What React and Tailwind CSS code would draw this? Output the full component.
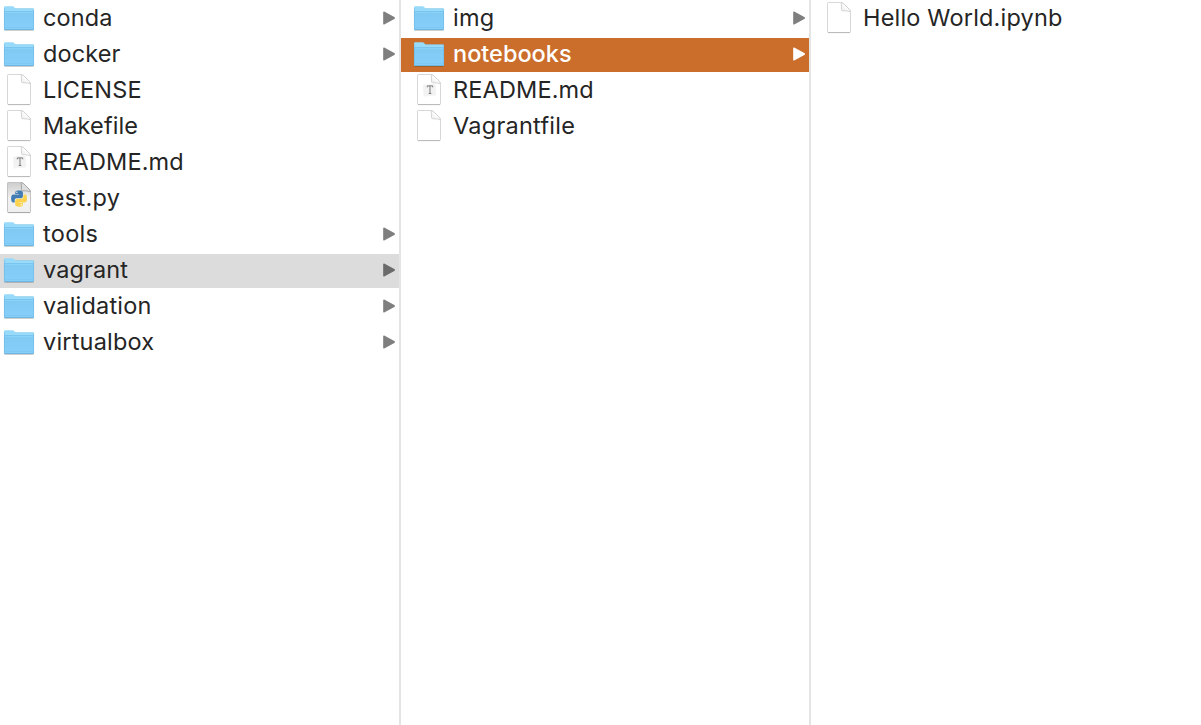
function FolderIcon() {
  return (
    <svg className="h-9 w-[38px] shrink-0" viewBox="0 0 38 36" fill="none">
      <defs>
        <linearGradient id="folderFront" x1="0" y1="12" x2="0" y2="30" gradientUnits="userSpaceOnUse">
          <stop offset="0" stopColor="#7fc9f3" />
          <stop offset="1" stopColor="#86cffa" />
        </linearGradient>
      </defs>
      <path d="M4.500 30.300h29" stroke="#000" strokeOpacity=".2" strokeWidth="1.200" />
      <path d="M4 7.500q0-1.300 1.300-1.300h7.200q1 0 1.600.7l.9 1q.5.500 1.400.5H32.800q1.200 0 1.200 1.200V29q0 1-1 1H5q-1 0-1-1z" fill="#97dafa" />
      <path d="M4 11.500h30V29q0 1-1 1H5q-1 0-1-1z" fill="url(#folderFront)" />
      <path d="M4.500 11.600h29" stroke="#74bfe8" strokeWidth=".8" />
      <path d="M5 12.500h28" stroke="#8dd3f8" strokeWidth=".8" />
      <path d="M5 27.500h28" stroke="#76c0ec" strokeOpacity=".5" strokeWidth=".8" />
      <path d="M4.400 29.600h29.200" stroke="#64a9d3" strokeWidth=".7" />
      <path d="M15 8.500h18.500" stroke="#79bede" strokeOpacity=".7" strokeWidth=".6" />
      <path d="M4.400 8v21.500M33.600 9v20.500" stroke="#66b3dd" strokeOpacity=".55" strokeWidth=".8" />
    </svg>
  );
}

function DocumentIcon({ kind }) {
  const python = kind === "python";
  return (
    <svg className="h-9 w-[38px] shrink-0" viewBox="0 0 38 36">
      <defs>
        <linearGradient id="pyPage" x1="0" y1="0" x2="0" y2="1">
          <stop offset="0" stopColor="#cdcdcd" />
          <stop offset=".55" stopColor="#f2f2f2" />
          <stop offset="1" stopColor="#efefef" />
        </linearGradient>
        <linearGradient id="fold" x1="0" y1="1" x2=".6" y2=".4">
          <stop offset="0" stopColor="#e8e8e8" />
          <stop offset="1" stopColor="#ffffff" />
        </linearGradient>
      </defs>
      <path d="M7.500 3.300q0-.8.800-.8H20.500Q22.500 2.500 24 4L29 9Q30.500 10.500 30.500 12.500V31.700q0 .8-.8.800H8.300q-.8 0-.8-.8z" fill={python ? "url(#pyPage)" : "#fff"} stroke={python ? "#bdbdbd" : "#d2d2d2"} strokeWidth=".9" />
      <path d="M8 32.600h22" stroke={python ? "#a4a4a4" : "#b4b4b4"} strokeWidth=".9" />
      <path d="M21 2.700Q21.600 4 21.500 9.500q0 1.200 1.200 1.200Q29 10.700 30.300 12 30.200 10.200 29 9L24 4Q22.800 2.800 21 2.700z" fill={python ? "#dedede" : "url(#fold)"} stroke={python ? "#999" : "#cacaca"} strokeWidth=".8" />
      {kind === "markdown" && (
        <g>
          <path d="M12.700 13.200l12.500-1.700 1.300 11.500-12.500 1.700z" fill="#f5f5f5" />
          <path d="M13.500 12.500h12v11h-12z" fill="#f2f2f2" />
          <path d="M17.300 15.300v-1.400h5.400v1.400M20 13.900v7.600M18.700 21.500h2.600" fill="none" stroke="#747474" strokeWidth=".95" />
        </g>
      )}
      {python && (
        <g transform="translate(10.900 10.400) scale(.68)">
          <path d="M11.900 0C6 0 6.400 2.600 6.400 2.600v2.700H12v.8H4.100S.3 5.600.3 11.800s3.300 6 3.300 6h2v-2.900s-.1-3.300 3.300-3.300h5.600s3.200 0 3.200-3.100V3.200S18.200 0 11.900 0z" fill="#427cb2" />
          <circle cx="8.800" cy="2.800" r="1" fill="#fff" />
          <path d="M12.100 23.900c5.900 0 5.500-2.600 5.500-2.600v-2.700H12v-.8h7.900s3.800.5 3.800-5.700-3.300-6-3.300-6h-2V9s.1 3.300-3.300 3.300H9.500s-3.200 0-3.200 3.100v5.300s-.5 3.200 5.800 3.200z" fill="#fbd34f" />
          <circle cx="15.200" cy="21.100" r="1" fill="#fff" />
        </g>
      )}
    </svg>
  );
}

function Row({ name, kind, state, spacing }) {
  const folder = kind === "folder";
  const background = state === "active" ? "bg-[#cb6e2b] text-white font-medium" : state === "open" ? "bg-[#dcdcdc] text-[#252525]" : "text-[#252525]";
  const arrow = state === "active" ? "text-white" : state === "open" ? "text-[#6b6b6b]" : "text-[#7f7f7f]";
  return (
    <li className="h-9 pt-0.5">
      <div className={`flex h-[34px] items-center pr-1 group-data-[inset=true]:pl-[9px] ${background}`}>
        <span className="-mt-0.5 flex">{folder ? <FolderIcon /> : <DocumentIcon kind={kind} />}</span>
        <span className={`-mt-0.5 ml-[5px] grow whitespace-nowrap text-[23.500px] leading-9 ${spacing}`}>{name}</span>
        {folder && (
          <svg className={`-mt-0.5 h-3.5 w-3 shrink-0 ${arrow}`} viewBox="0 0 12 14">
            <path d="M.9 1.200 11 6.600q.5.400 0 .8L.9 12.800z" fill="currentColor" stroke="currentColor" strokeWidth="1.400" strokeLinejoin="round" />
          </svg>
        )}
      </div>
    </li>
  );
}

const root = [
  { name: "conda", kind: "folder", spacing: "tracking-[0.1px]" },
  { name: "docker", kind: "folder", spacing: "tracking-[0.1px]" },
  { name: "LICENSE", kind: "file", spacing: "tracking-[0.12px]" },
  { name: "Makefile", kind: "file", spacing: "tracking-[0.1px]" },
  { name: "README.md", kind: "markdown", spacing: "tracking-[0.15px]" },
  { name: "test.py", kind: "python", spacing: "tracking-[0.3px]" },
  { name: "tools", kind: "folder", spacing: "tracking-[0.3px]" },
  { name: "vagrant", kind: "folder", state: "open", spacing: "tracking-[0.12px]" },
  { name: "validation", kind: "folder", spacing: "tracking-[0.2px]" },
  { name: "virtualbox", kind: "folder", spacing: "tracking-[0.2px]" },
];

const vagrant = [
  { name: "img", kind: "folder", spacing: "tracking-[0.2px]" },
  { name: "notebooks", kind: "folder", state: "active", spacing: "tracking-[0px]" },
  { name: "README.md", kind: "markdown", spacing: "tracking-[0.15px]" },
  { name: "Vagrantfile", kind: "file", spacing: "tracking-[0.25px]" },
];

const notebooks = [{ name: "Hello World.ipynb", kind: "file", spacing: "tracking-[0.18px]" }];

function Column({ items, inset, className }) {
  return (
    <ul data-inset={inset} className={`group h-full ${className}`}>
      {items.map((item) => (
        <Row key={item.name} {...item} />
      ))}
    </ul>
  );
}

export default function App() {
  return (
    <main className="flex h-screen w-full overflow-hidden bg-white font-['Inter',sans-serif]">
      <Column items={root} inset={false} className="w-[401px] shrink-0 border-r-2 border-[#e4e4e4]" />
      <Column items={vagrant} inset={true} className="w-[410px] shrink-0 border-r-2 border-[#e4e4e4]" />
      <Column items={notebooks} inset={true} className="grow" />
    </main>
  );
}
